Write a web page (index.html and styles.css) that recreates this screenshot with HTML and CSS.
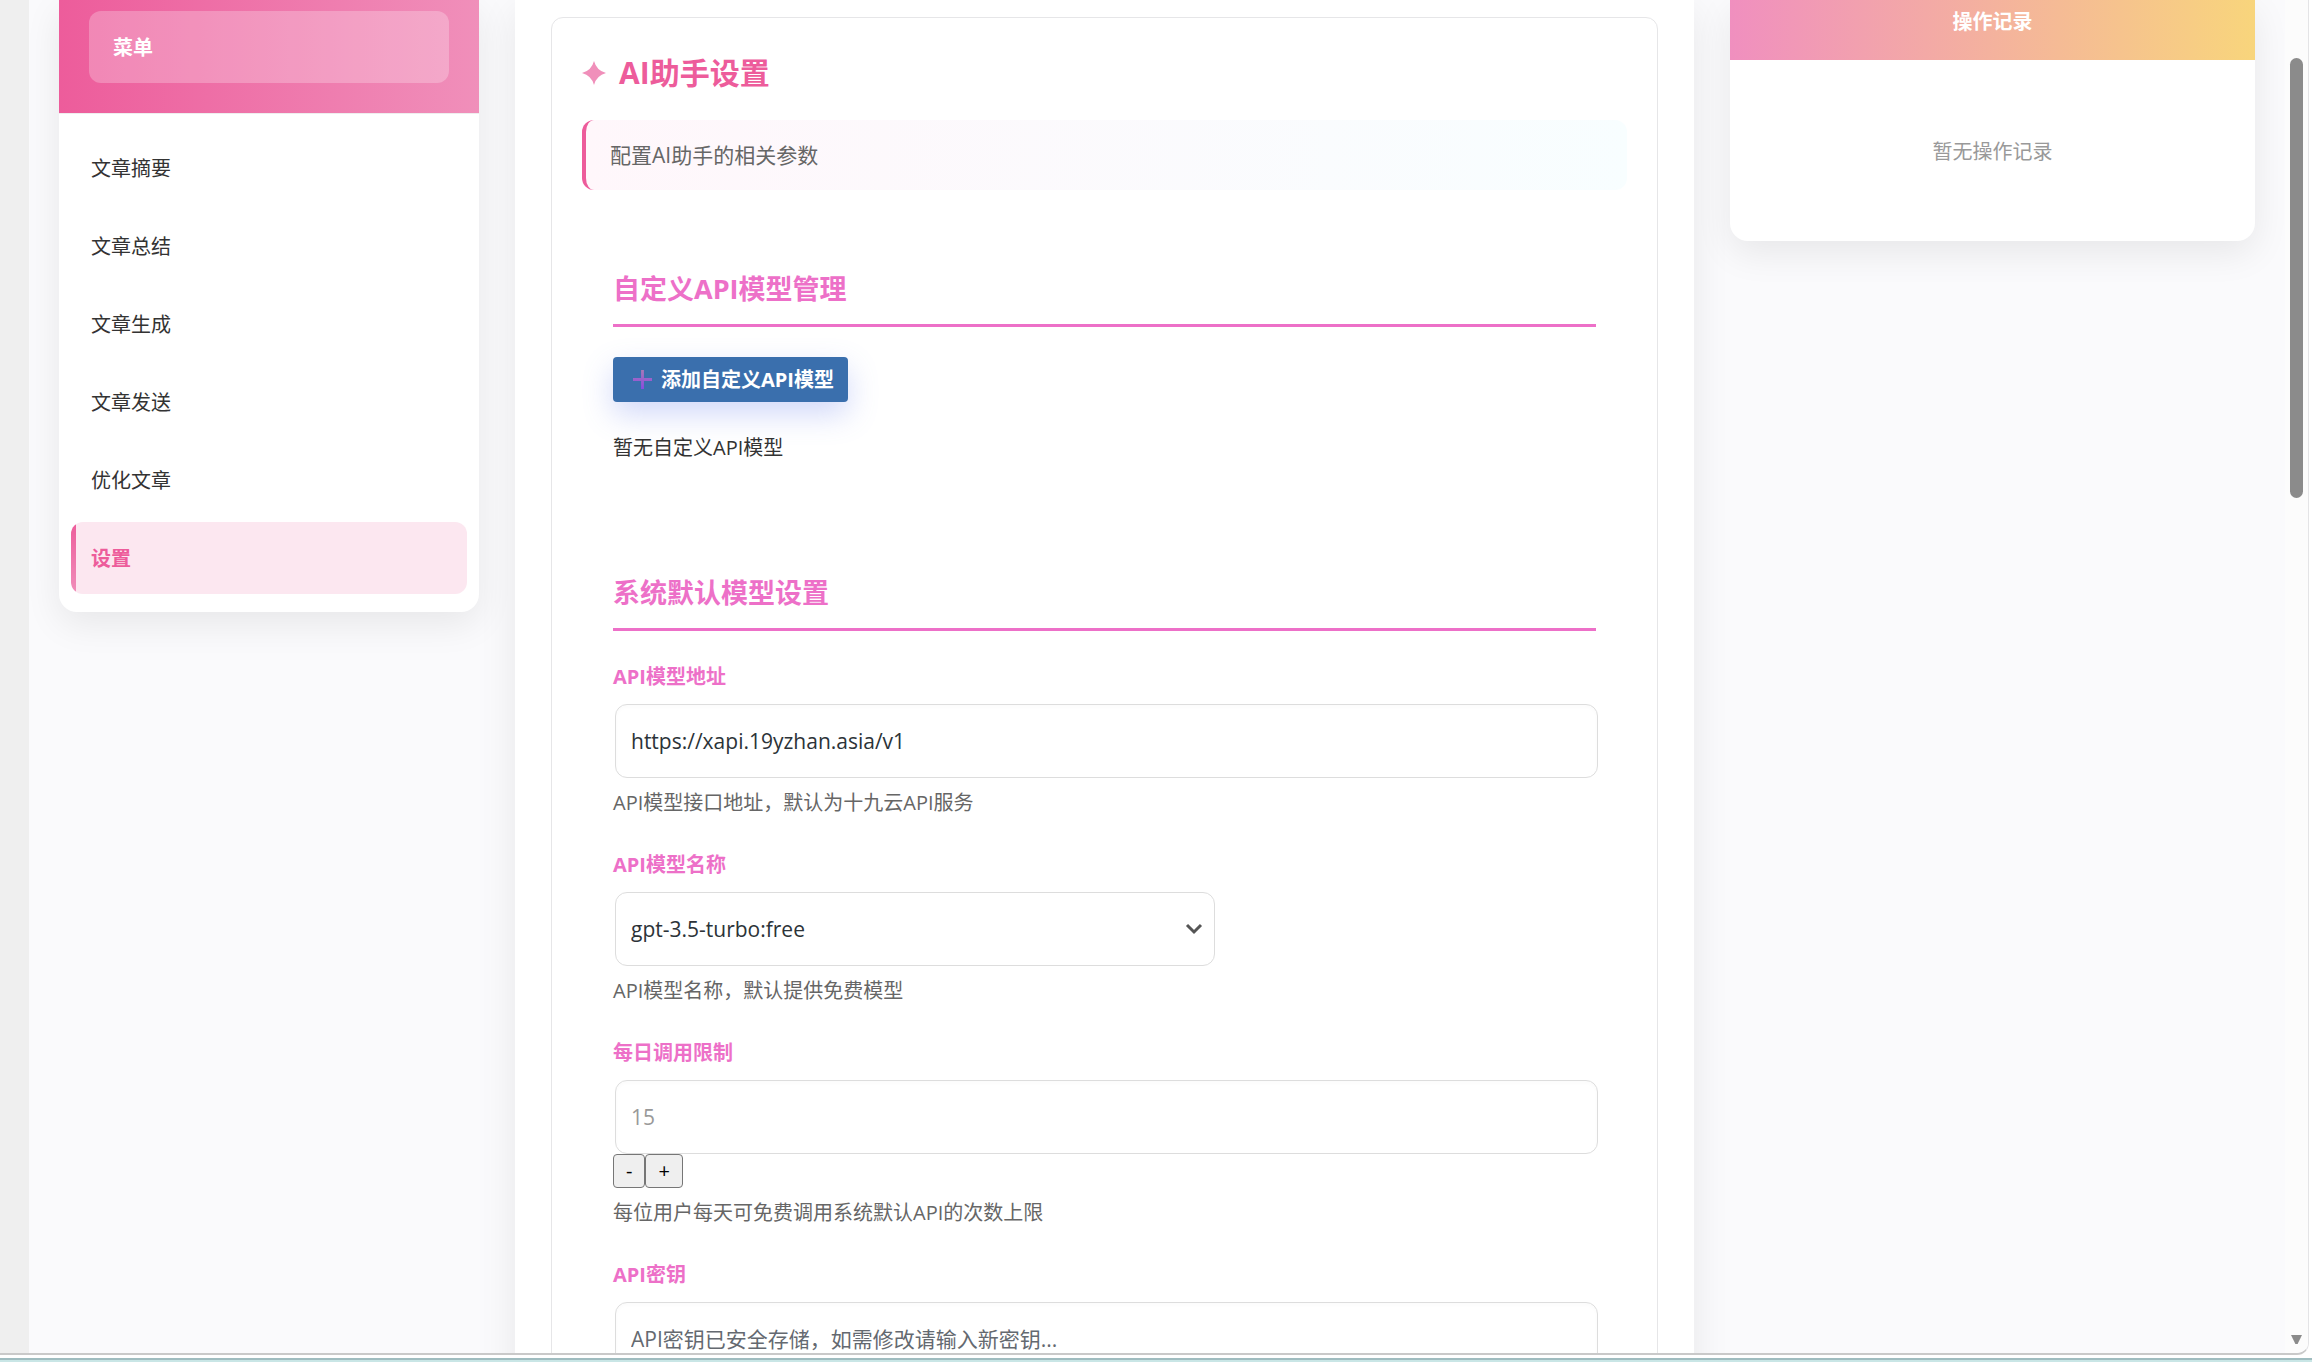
FILE: index.html
```html
<!DOCTYPE html>
<html lang="zh-CN">
<head>
<meta charset="utf-8">
<title>AI助手设置</title>
<link rel="stylesheet" href="styles.css">
</head>
<body>
<div class="window">
  <div class="rail"></div>
  <div class="page">
    <aside class="sidebar">
      <div class="sidebar-head"><div class="menu-title">菜单</div></div>
      <nav class="menu">
        <a class="menu-item" href="#summary">文章摘要</a>
        <a class="menu-item" href="#conclusion">文章总结</a>
        <a class="menu-item" href="#generate">文章生成</a>
        <a class="menu-item" href="#send">文章发送</a>
        <a class="menu-item" href="#optimize">优化文章</a>
        <a class="menu-item active" href="#settings">设置</a>
      </nav>
    </aside>

    <main class="content">
      <div class="panel">
        <h1 class="panel-title">
          <svg class="spark" viewBox="0 0 24 24" aria-hidden="true"><path d="M12 0Q14.5 9.5 24 12Q14.5 14.5 12 24Q9.500 14.500 0 12Q9.500 9.500 12 0Z"/></svg>
          AI助手设置
        </h1>
        <p class="panel-desc">配置AI助手的相关参数</p>

        <section class="section">
          <h2 class="section-title">自定义API模型管理</h2>
          <button class="add-button" type="button">
            <svg class="add-icon" viewBox="0 0 20 20" aria-hidden="true">
              <defs><linearGradient id="plus" x1="0" y1="0" x2="0" y2="1"><stop offset="0" stop-color="#a878b8"/><stop offset="1" stop-color="#8a4ae0"/></linearGradient></defs>
              <path fill="url(#plus)" d="M8.500 0h3v8.500H20v3h-8.500V20h-3v-8.500H0v-3h8.500z"/>
            </svg>
            添加自定义API模型
          </button>
          <p class="empty-models">暂无自定义API模型</p>
        </section>

        <section class="section">
          <h2 class="section-title">系统默认模型设置</h2>
          <div class="fields">
            <div class="field">
              <label for="api-url">API模型地址</label>
              <input class="control" id="api-url" type="text" value="https://xapi.19yzhan.asia/v1">
              <p class="hint">API模型接口地址，默认为十九云API服务</p>
            </div>
            <div class="field">
              <label for="api-model">API模型名称</label>
              <select class="control select" id="api-model"><option>gpt-3.5-turbo:free</option></select>
              <p class="hint">API模型名称，默认提供免费模型</p>
            </div>
            <div class="field">
              <label for="daily-limit">每日调用限制</label>
              <input class="control dim" id="daily-limit" type="text" inputmode="numeric" placeholder="15">
              <div class="stepper"><button type="button">-</button><button type="button">+</button></div>
              <p class="hint">每位用户每天可免费调用系统默认API的次数上限</p>
            </div>
            <div class="field">
              <label for="api-key">API密钥</label>
              <input class="control" id="api-key" type="password" placeholder="API密钥已安全存储，如需修改请输入新密钥...">
            </div>
          </div>
        </section>
      </div>
    </main>

    <aside class="log">
      <h2 class="log-title">操作记录</h2>
      <p class="log-empty">暂无操作记录</p>
    </aside>
  </div>
  <div class="scrollbar"><div class="thumb"></div><div class="arrow"></div></div>
</div>
<div class="desktop"></div>
</body>
</html>
```

FILE: styles.css
```css
* { box-sizing: border-box; }

body {
  margin: 0;
  height: 100vh;
  display: flex;
  flex-direction: column;
  overflow: hidden;
  background: #fff;
  color: #333;
  font: 20px/30px "Open Sans", "Noto Sans CJK SC", sans-serif;
}

h1, h2, p { margin: 0; }

.window {
  flex: 1;
  min-height: 0;
  display: flex;
  overflow: hidden;
  margin-right: 3px;
  background: #fafafc;
  border-right: 1px solid #e4e4e6;
  border-bottom: 2px solid #c9c9c9;
  border-bottom-right-radius: 12px;
}

.desktop {
  height: 7px;
  background: #c9e6e6;
  border-top: 3px solid #fff;
  box-shadow: inset 0 2px #9fbcbf;
}

.rail { width: 29px; background: #efefef; }

.page {
  flex: 1;
  display: grid;
  grid-template-columns: 420px minmax(0, 1fr) 525px;
  gap: 36px;
  align-items: start;
  padding: 0 30px;
}

.sidebar, .log, .content {
  background: #fff;
  box-shadow: 0 12px 36px rgba(0, 0, 0, .08);
}

.sidebar, .log { border-radius: 0 0 18px 18px; }

.sidebar-head {
  padding: 11px 30px 30px;
  background: linear-gradient(90deg, #ed5c9b, #f08fba);
  border-bottom: 1px solid #eee;
}

.menu-title {
  padding: 22px 24px 20px;
  border-radius: 12px;
  background: rgba(255, 255, 255, .25);
  color: #fff;
  font-weight: 700;
}

.menu {
  display: grid;
  gap: 6px;
  padding: 18px 12px;
}

.menu-item {
  padding: 22px 20px 20px;
  border-radius: 12px;
  color: #333;
  text-decoration: none;
}

.menu-item.active {
  background: linear-gradient(180deg, #ed5c9b, #f08fba) left / 5px 100% no-repeat, #fce7f0;
  color: #ed5c9b;
  font-weight: 700;
}

.content {
  align-self: stretch;
  padding: 17px 36px;
}

.panel {
  padding: 34px 30px;
  border: 1px solid #e6e6e8;
  border-radius: 12px;
}

.panel-title {
  display: flex;
  align-items: center;
  gap: 13px;
  margin-bottom: 26px;
  color: #ed5c9b;
  font-size: 30px;
  line-height: 42px;
}

.spark { width: 24px; height: 26px; fill: #f08fba; }

.panel-desc {
  padding: 20px 24px;
  border-left: 4px solid #ed5c9b;
  border-radius: 12px;
  background: linear-gradient(90deg, #fff7fb, #f8feff);
  color: #666;
  font-size: 21px;
}

.section { padding: 79px 31px 0; }
.section + .section { padding-top: 110px; }

.section-title {
  margin-bottom: 30px;
  padding-bottom: 15px;
  border-bottom: 3px solid #ed70c8;
  color: #ed70c8;
  font-size: 27px;
  line-height: 40px;
}

.add-button {
  display: flex;
  align-items: center;
  gap: 9px;
  height: 45px;
  padding: 0 14px 0 20px;
  border: 0;
  border-radius: 4px;
  background: #3a6fad;
  box-shadow: 0 12px 30px rgba(102, 126, 234, .3);
  color: #fff;
  font: inherit;
  font-weight: 700;
}

.add-icon { width: 19px; height: 19px; }

.empty-models { margin-top: 31px; }

.fields { display: grid; gap: 32px; padding-top: 1px; }

.field label {
  display: block;
  margin-bottom: 12px;
  color: #ed70c8;
  font-weight: 700;
}

.control {
  display: block;
  width: 100%;
  height: 74px;
  margin: 0 0 0 2px;
  padding: 0 15px;
  border: 1px solid #ddd;
  border-radius: 12px;
  background: #fff;
  box-shadow: inset 0 2px 4px rgba(0, 0, 0, .02);
  color: #2c3338;
  font: inherit;
  font-size: 21px;
}

.control::placeholder { color: #646970; opacity: 1; }
.control.dim::placeholder { color: #999; }

.select {
  width: 600px;
  max-width: 100%;
  appearance: none;
  background: #fff url("data:image/svg+xml,%3Csvg xmlns='http://www.w3.org/2000/svg' viewBox='0 0 18 12'%3E%3Cpath d='M2 2l7 7 7-7' fill='none' stroke='%23555' stroke-width='3'/%3E%3C/svg%3E") right 11px center / 18px 12px no-repeat;
  box-shadow: none;
}

.stepper { display: flex; }

.stepper button {
  height: 34px;
  padding: 0 12px;
  border: 1px solid #767676;
  border-radius: 4px;
  background: #efefef;
  color: #000;
  font: inherit;
}

.hint { margin-top: 10px; color: #666; }

.log-title {
  padding: 7px 0 23px;
  background: linear-gradient(90deg, #f08fbf, #f8d57c);
  color: #fff;
  font-size: 20px;
  text-align: center;
}

.log-empty {
  padding: 77px 0 74px;
  color: #999;
  text-align: center;
}

.scrollbar {
  width: 23px;
  display: flex;
  flex-direction: column;
  align-items: center;
  justify-content: space-between;
  padding: 58px 0 9px;
  background: #fcfcfc;
}

.thumb { width: 13px; height: 440px; border-radius: 7px; background: #8b8b8b; }

.arrow {
  width: 11px;
  height: 9px;
  background: #8b8b8b;
  clip-path: polygon(0 0, 100% 0, 60% 100%, 40% 100%);
}
```
